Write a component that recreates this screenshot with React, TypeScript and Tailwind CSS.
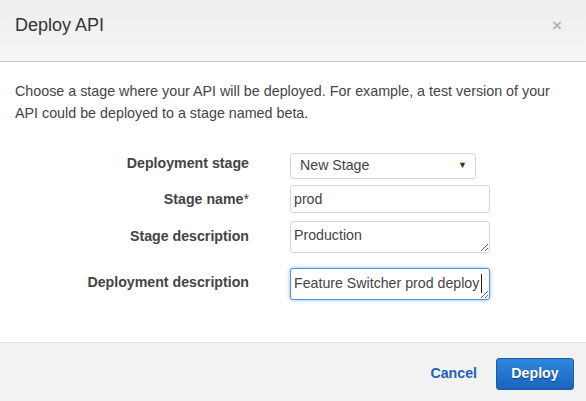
export default function App() {
  return (
    <div className="w-[586px] h-[401px] bg-white flex flex-col text-[#444] font-['Liberation_Sans',Arial,sans-serif] overflow-hidden">
      {/* Header */}
      <div className="h-[62px] flex-shrink-0 flex items-start justify-between pl-[15px] pr-[24px] pt-[11px] bg-gradient-to-b from-[#eeeeee] to-[#f5f5f5] border-b border-[#c9c9c9]">
        <div className="text-[18px] leading-[28px] text-[#333]">Deploy API</div>
        <button className="text-[#b5b5b5] font-bold text-[17px] leading-none mt-[6px]">&times;</button>
      </div>

      {/* Body */}
      <div className="flex-1 px-[15px] pt-[18px]">
        <p className="text-[14.3px] leading-[22px] text-[#444]">
          Choose a stage where your API will be deployed. For example, a test version of your
          <br />
          API could be deployed to a stage named beta.
        </p>

        <div className="mt-[29px] flex flex-col">
          <div className="flex items-start">
            <label className="w-[234px] text-right font-bold text-[14.2px] leading-[20px] pt-[0px]">Deployment stage</label>
            <div className="ml-[41px] w-[186px] h-[26px] flex items-center justify-between pl-[9px] pr-[8px] border border-[#d5d5d5] rounded-[3px] bg-white text-[14.2px]">
              <span>New Stage</span>
              <span className="text-[9px] text-[#333]">&#9660;</span>
            </div>
          </div>

          <div className="flex items-start mt-[6px]">
            <label className="w-[234px] text-right font-bold text-[14.2px] leading-[20px] pt-[4px]">
              Stage name<span className="font-normal">*</span>
            </label>
            <input
              readOnly
              defaultValue="prod"
              className="ml-[41px] w-[200px] h-[28px] px-[3px] border border-[#d5d5d5] rounded-[3px] bg-white text-[14.2px] text-[#444] outline-none"
            />
          </div>

          <div className="flex items-start mt-[8px]">
            <label className="w-[234px] text-right font-bold text-[14.2px] leading-[20px] pt-[5px]">Stage description</label>
            <textarea
              readOnly
              defaultValue="Production"
              className="ml-[41px] w-[200px] h-[32px] px-[3px] py-[4px] border border-[#d5d5d5] rounded-[3px] bg-white text-[14.2px] leading-[18px] text-[#444] outline-none"
            />
          </div>

          <div className="flex items-start mt-[15px]">
            <label className="w-[234px] text-right font-bold text-[14.2px] leading-[20px] pt-[4px]">Deployment description</label>
            <div className="relative ml-[41px]">
              <textarea
                readOnly
                defaultValue="Feature Switcher prod deploy"
                className="block w-[200px] h-[32px] px-[3px] py-[5px] border border-[#4a90e2] rounded-[3px] bg-white text-[14.2px] leading-[18px] text-[#444] outline-none shadow-[0_0_4px_rgba(74,144,226,0.6)] overflow-hidden whitespace-nowrap"
              />
              <span className="absolute left-[191px] top-[6px] w-px h-[19px] bg-[#222]" />
            </div>
          </div>
        </div>
      </div>

      {/* Footer */}
      <div className="h-[59px] flex-shrink-0 flex items-center justify-end gap-[19px] pr-[12px] pt-[3px] bg-[#f2f2f2] border-t border-[#e3e3e3]">
        <button className="text-[14.2px] font-bold text-[#2160b8]">Cancel</button>
        <button className="w-[78px] h-[32px] rounded-[3px] border border-[#1b5aa6] bg-gradient-to-b from-[#2f88dc] to-[#1a63bf] text-white text-[14.2px] font-bold [text-shadow:0_1px_1px_rgba(0,0,0,0.45)]">
          Deploy
        </button>
      </div>
    </div>
  );
}
